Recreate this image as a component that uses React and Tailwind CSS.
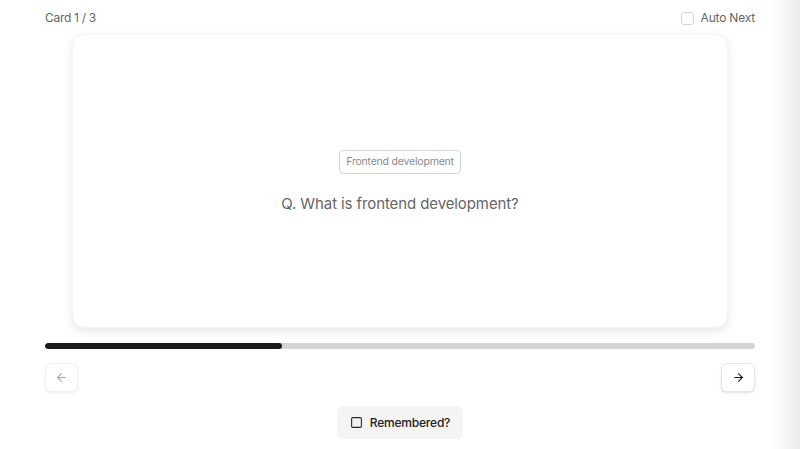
import { ArrowLeft, ArrowRight, Square } from 'lucide-react';

export default function App() {
  const current = 1;
  const total = 3;

  return (
    <div className="flex min-h-[449px] w-full bg-white" style={{ fontFamily: 'Inter, "Noto Sans", sans-serif' }}>
      <main className="flex-1 pl-[45px] pr-[15px] pt-[10px]">
        {/* Header */}
        <div className="flex items-center justify-between h-[16px]">
          <span className="text-[12px] tracking-[-0.3px] text-[#666]">Card {current} / {total}</span>
          <label className="flex items-center gap-[7px] text-[12px] tracking-[-0.2px] text-[#666]">
            <span className="w-[13px] h-[13px] rounded-[3px] border border-gray-300 bg-white" />
            Auto Next
          </label>
        </div>

        {/* Card */}
        <div className="mt-[8px] mx-auto w-[656px] h-[294px] rounded-[12px] border border-gray-100 bg-white shadow-[0_3px_10px_rgba(0,0,0,0.1)] flex flex-col items-center justify-center">
          <span className="mt-[3px] px-[6px] py-[3px] rounded-[4px] border border-gray-300 text-[10.5px] tracking-[-0.2px] text-[#8a8a8a]">
            Frontend development
          </span>
          <p className="mt-[19px] text-[15px] tracking-[-0.1px] text-[#666]">Q. What is frontend development?</p>
        </div>

        {/* Progress */}
        <div className="mt-[15px] h-[6px] rounded-full bg-[#d4d4d4] overflow-hidden">
          <div className="h-full bg-[#1a1a1a] rounded-full" style={{ width: `${(current / total) * 100}%` }} />
        </div>

        {/* Nav */}
        <div className="mt-[14px] flex items-center justify-between">
          <button className="w-[33px] h-[29px] rounded-[6px] border border-gray-200 bg-white flex items-center justify-center opacity-50 shadow-sm">
            <ArrowLeft className="w-[13px] h-[13px] text-gray-600" strokeWidth={2} />
          </button>
          <button className="w-[34px] h-[29px] rounded-[6px] border border-gray-200 bg-white flex items-center justify-center shadow-sm">
            <ArrowRight className="w-[13px] h-[13px] text-gray-900" strokeWidth={2} />
          </button>
        </div>

        <div className="mt-[14px] flex justify-center">
          <button className="flex items-center gap-[7px] h-[33px] px-[13px] rounded-[6px] bg-[#f4f4f4] text-[12px] tracking-[-0.2px] font-medium text-[#222]">
            <Square className="w-[13px] h-[13px] text-gray-800" strokeWidth={2} />
            Remembered?
          </button>
        </div>
      </main>
      <aside className="w-[30px] bg-gradient-to-r from-white to-[#ececec]" />
    </div>
  );
}
